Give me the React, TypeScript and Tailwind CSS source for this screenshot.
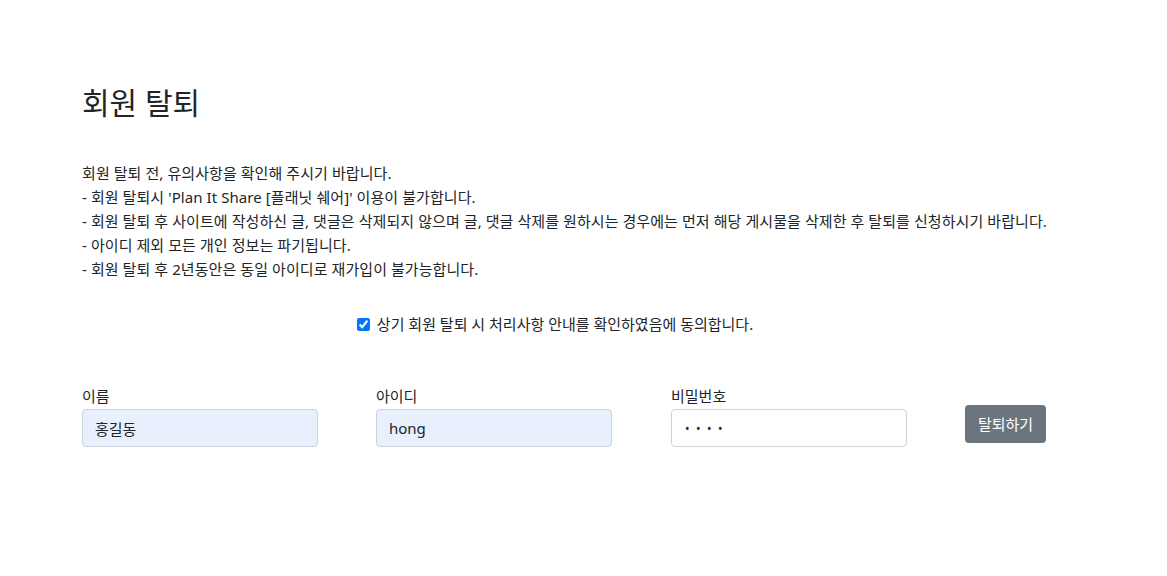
import React from 'react'

const notices = [
  '회원 탈퇴 전, 유의사항을 확인해 주시기 바랍니다.',
  "- 회원 탈퇴시 'Plan It Share [플래닛 쉐어]' 이용이 불가합니다.",
  '- 회원 탈퇴 후 사이트에 작성하신 글, 댓글은 삭제되지 않으며 글, 댓글 삭제를 원하시는 경우에는 먼저 해당 게시물을 삭제한 후 탈퇴를 신청하시기 바랍니다.',
  '- 아이디 제외 모든 개인 정보는 파기됩니다.',
  '- 회원 탈퇴 후 2년동안은 동일 아이디로 재가입이 불가능합니다.',
]

function Field({
  label,
  value,
  type = 'text',
  filled,
  width,
}: {
  label: string
  value: string
  type?: string
  filled?: boolean
  width: string
}) {
  const isPassword = type === 'password'
  return (
    <div className={`${width} shrink-0`}>
      <label className="block text-[15px] leading-6">{label}</label>
      <input
        type={type}
        defaultValue={value}
        readOnly
        className={`mt-px block w-[236px] h-[38px] rounded border border-[#ced4da] text-[#212529] outline-none ${
          filled ? 'bg-[#e8f0fe]' : 'bg-white'
        } ${isPassword ? 'pl-[13px] text-[12px] tracking-[6.5px]' : 'px-3 text-[15px]'}`}
      />
    </div>
  )
}

export default function App() {
  return (
    <div
      className="min-h-[576px] bg-white text-[#212529]"
      style={{ fontFamily: '"Noto Sans", "Noto Sans CJK KR", sans-serif' }}
    >
      <div className="ml-[82px] w-[964px] pt-[84px]">
        {/* Title */}
        <h1 className="text-[30px] leading-[38px] font-normal">회원 탈퇴</h1>

        {/* Notices */}
        <div className="mt-[39px] text-[15px] leading-6 tracking-[0.005em]">
          {notices.map(line => (
            <p key={line} className="whitespace-nowrap">{line}</p>
          ))}
        </div>

        {/* Agreement */}
        <div className="mt-[31px] flex items-center justify-center gap-[7px] pr-[18px] h-6 text-[15px]">
          <input type="checkbox" defaultChecked className="w-[13px] h-[13px] accent-[#0075ff]" />
          <span>상기 회원 탈퇴 시 처리사항 안내를 확인하였음에 동의합니다.</span>
        </div>

        {/* Form */}
        <div className="mt-[48px] flex items-start">
          <Field label="이름" value="홍길동" filled width="w-[294px]" />
          <Field label="아이디" value="hong" filled width="w-[295px]" />
          <Field label="비밀번호" value="1234" type="password" width="w-[294px]" />
          <button className="mt-[21px] h-[38px] w-[81px] rounded bg-[#6c757d] text-white text-[15px]">
            탈퇴하기
          </button>
        </div>
      </div>
    </div>
  )
}
